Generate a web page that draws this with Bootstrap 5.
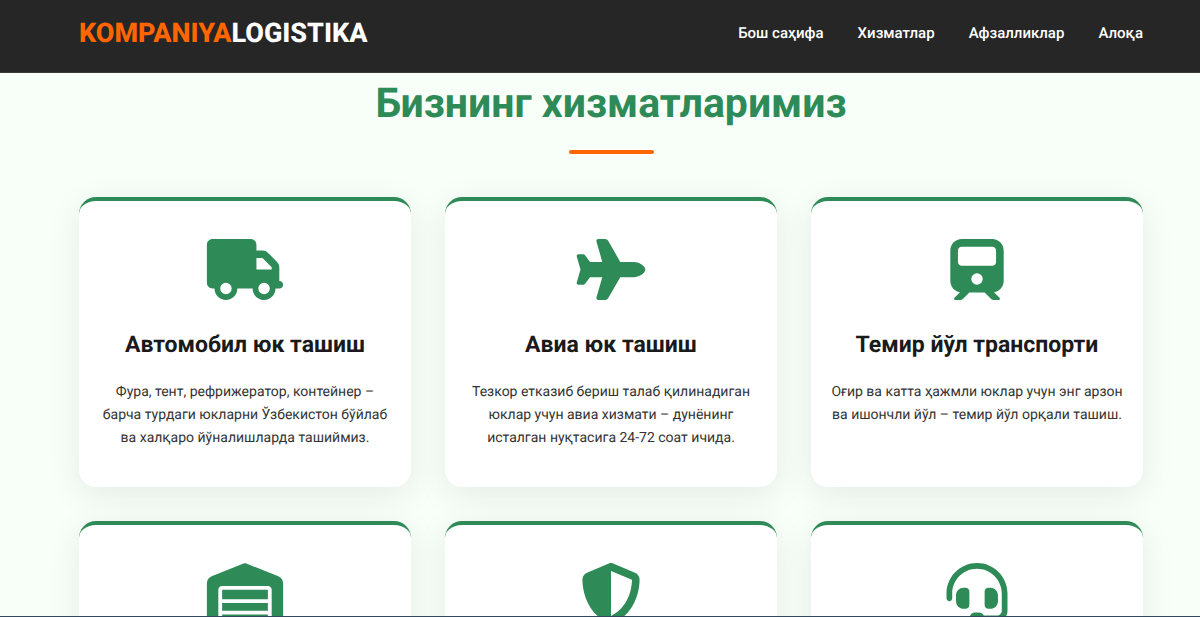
<!DOCTYPE html>
<html lang="uz-Cyrl">
<head>
<meta charset="utf-8">
<meta name="viewport" content="width=device-width, initial-scale=1">
<title>KompaniyaLogistika</title>
<link href="https://cdn.jsdelivr.net/npm/bootstrap@5.3.0/dist/css/bootstrap.min.css" rel="stylesheet">
<style>
  :root { --brand-green: #2e8b57; --brand-orange: #ff6600; --ink: #262626; }
  body { font-family: Roboto, "Liberation Sans", sans-serif; text-rendering: geometricPrecision; background: #f8fff8; color: #1a1a1a; height: 100vh; overflow: hidden; }
  .page-wrap { padding-left: 79px; padding-right: 57px; }
  .site-header { background: var(--ink); height: 73px; padding-bottom: 7px; border-bottom: 1px solid #3c3c3c; }
  .site-logo { font-size: 27px; line-height: 32px; font-weight: 800; color: #fff; }
  .site-logo span { color: var(--brand-orange); }
  .site-menu { gap: 34px; }
  .site-menu .nav-link { color: #fff; font-size: 15px; line-height: 24px; font-weight: 500; }
  .section-title { color: var(--brand-green); font-size: 41px; line-height: 62px; font-weight: 700; }
  .title-bar { width: 85px; height: 4px; border-radius: 2px; background: var(--brand-orange); margin: 15px auto 43px; }
  .services { --bs-gutter-x: 34px; --bs-gutter-y: 34px; }
  .service { min-height: 290px; padding: 38px 20px 30px; border: 0; border-top: 4px solid var(--brand-green); border-radius: 17px; box-shadow: 0 8px 34px rgba(0, 0, 0, .08); }
  .service svg { height: 61px; fill: var(--brand-green); margin-bottom: 30px; }
  .service h3 { font-size: 23px; line-height: 29px; font-weight: 700; margin-bottom: 22px; }
  .service p { font-size: 14px; line-height: 23px; color: #333; }
  .page-edge { height: 1px; background: #34495e; }
</style>
</head>
<body>
<header class="site-header page-wrap d-flex align-items-center justify-content-between">
  <a class="site-logo text-decoration-none" href="#"><span>KOMPANIYA</span>LOGISTIKA</a>
  <nav class="nav site-menu flex-nowrap" aria-label="Меню">
    <a class="nav-link p-0" href="#">Бош саҳифа</a>
    <a class="nav-link p-0" href="#services">Хизматлар</a>
    <a class="nav-link p-0" href="#">Афзалликлар</a>
    <a class="nav-link p-0" href="#">Алоқа</a>
  </nav>
</header>
<main class="page-wrap" id="services">
  <h2 class="section-title text-center mb-0">Бизнинг хизматларимиз</h2>
  <div class="title-bar"></div>
  <div class="row services">
    <div class="col-12 col-md-4">
      <article class="card service text-center h-100">
        <svg viewBox="0 0 640 512" aria-hidden="true"><path d="M48 0C21.5 0 0 21.5 0 48V368c0 26.5 21.5 48 48 48H64c0 53 43 96 96 96s96-43 96-96H384c0 53 43 96 96 96s96-43 96-96h32c17.7 0 32-14.3 32-32s-14.3-32-32-32V288 256 237.3c0-17-6.7-33.3-18.7-45.3L512 114.7c-12-12-28.3-18.7-45.3-18.7H416V48c0-26.5-21.5-48-48-48H48zM416 160h50.7L544 237.3V256H416V160zM112 416a48 48 0 1 1 96 0 48 48 0 1 1 -96 0zm368-48a48 48 0 1 1 0 96 48 48 0 1 1 0-96z"/></svg>
        <h3>Автомобил юк ташиш</h3>
        <p class="mb-0">Фура, тент, рефрижератор, контейнер – барча турдаги юкларни Ўзбекистон бўйлаб ва халқаро йўналишларда ташиймиз.</p>
      </article>
    </div>
    <div class="col-12 col-md-4">
      <article class="card service text-center h-100">
        <svg viewBox="0 0 576 512" aria-hidden="true"><path d="M482.3 192c34.2 0 93.7 29 93.7 64c0 36-59.5 64-93.7 64l-116.6 0L265.2 495.9c-5.7 10-16.3 16.1-27.8 16.1l-56.2 0c-10.6 0-18.3-10.2-15.4-20.4l49-171.6L112 320 68.8 377.6c-3 4-7.8 6.4-12.8 6.4l-42 0c-7.8 0-14-6.3-14-14c0-1.3 .2-2.6 .5-3.9L32 256 .5 145.9c-.4-1.3-.5-2.6-.5-3.9c0-7.8 6.3-14 14-14l42 0c5 0 9.8 2.4 12.8 6.4L112 192l102.9 0-49-171.6C162.9 10.2 170.6 0 181.2 0l56.2 0c11.5 0 22.1 6.2 27.8 16.1L365.7 192l116.6 0z"/></svg>
        <h3>Авиа юк ташиш</h3>
        <p class="mb-0">Тезкор етказиб бериш талаб қилинадиган юклар учун авиа хизмати – дунёнинг исталган нуқтасига 24-72 соат ичида.</p>
      </article>
    </div>
    <div class="col-12 col-md-4">
      <article class="card service text-center h-100">
        <svg viewBox="0 0 448 512" aria-hidden="true"><path d="M96 0C43 0 0 43 0 96V352c0 48 35.2 87.7 81.1 94.9l-46 46C28.1 499.9 33.1 512 43 512H82.7c8.5 0 16.6-3.4 22.6-9.4L160 448H288l54.6 54.6c6 6 14.1 9.4 22.6 9.4H405c10 0 15-12.1 7.9-19.1l-46-46c46-7.1 81.1-46.9 81.1-94.9V96c0-53-43-96-96-96H96zM64 96c0-17.7 14.3-32 32-32H352c17.7 0 32 14.3 32 32v96c0 17.7-14.3 32-32 32H96c-17.7 0-32-14.3-32-32V96zM224 288a48 48 0 1 1 0 96 48 48 0 1 1 0-96z"/></svg>
        <h3>Темир йўл транспорти</h3>
        <p class="mb-0">Оғир ва катта ҳажмли юклар учун энг арзон ва ишончли йўл – темир йўл орқали ташиш.</p>
      </article>
    </div>
    <div class="col-12 col-md-4">
      <article class="card service text-center h-100">
        <svg viewBox="0 0 640 512" aria-hidden="true"><path d="M0 488V171.3c0-26.2 15.9-49.7 40.2-59.4L308.1 4.8c7.6-3.1 16.1-3.1 23.8 0L599.8 111.9c24.3 9.7 40.2 33.3 40.2 59.4V488c0 13.3-10.7 24-24 24H568c-13.3 0-24-10.7-24-24V224c0-17.7-14.3-32-32-32H128c-17.7 0-32 14.3-32 32V488c0 13.3-10.7 24-24 24H24c-13.3 0-24-10.7-24-24zm488 24l-336 0c-13.3 0-24-10.7-24-24V432H512l0 56c0 13.3-10.7 24-24 24zM128 400V336H512v64H128zm0-96V224H512l0 80H128z"/></svg>
      </article>
    </div>
    <div class="col-12 col-md-4">
      <article class="card service text-center h-100">
        <svg viewBox="0 0 512 512" aria-hidden="true"><path d="M256 0c4.6 0 9.2 1 13.4 2.9L457.7 82.8c22 9.3 38.4 31 38.3 57.2c-.5 99.2-41.3 280.7-213.6 363.2c-16.7 8-36.1 8-52.8 0C57.3 420.7 16.5 239.2 16 140c-.1-26.2 16.3-47.9 38.3-57.2L242.7 2.9C246.8 1 251.4 0 256 0zm0 66.8V444.8C394 378 431.1 230.1 432 141.4L256 66.8l0 0z"/></svg>
      </article>
    </div>
    <div class="col-12 col-md-4">
      <article class="card service text-center h-100">
        <svg viewBox="0 0 512 512" aria-hidden="true"><path d="M256 48C141.1 48 48 141.1 48 256v40c0 13.3-10.7 24-24 24s-24-10.7-24-24V256C0 114.6 114.6 0 256 0S512 114.6 512 256V400.1c0 48.6-39.4 88-88.1 88L313.6 488c-8.3 14.3-23.8 24-41.6 24H240c-26.5 0-48-21.5-48-48s21.5-48 48-48h32c17.8 0 33.3 9.7 41.6 24l110.4 .1c22.1 0 40-17.9 40-40V256c0-114.9-93.1-208-208-208zM144 208h16c17.7 0 32 14.3 32 32V352c0 17.7-14.3 32-32 32H144c-35.3 0-64-28.7-64-64V272c0-35.3 28.7-64 64-64zm224 0c35.3 0 64 28.7 64 64v48c0 35.3-28.7 64-64 64H352c-17.7 0-32-14.3-32-32V240c0-17.7 14.3-32 32-32h16z"/></svg>
      </article>
    </div>
  </div>
</main>
<div class="page-edge fixed-bottom"></div>
<script src="https://cdn.jsdelivr.net/npm/bootstrap@5.3.0/dist/js/bootstrap.bundle.min.js"></script>
</body>
</html>
